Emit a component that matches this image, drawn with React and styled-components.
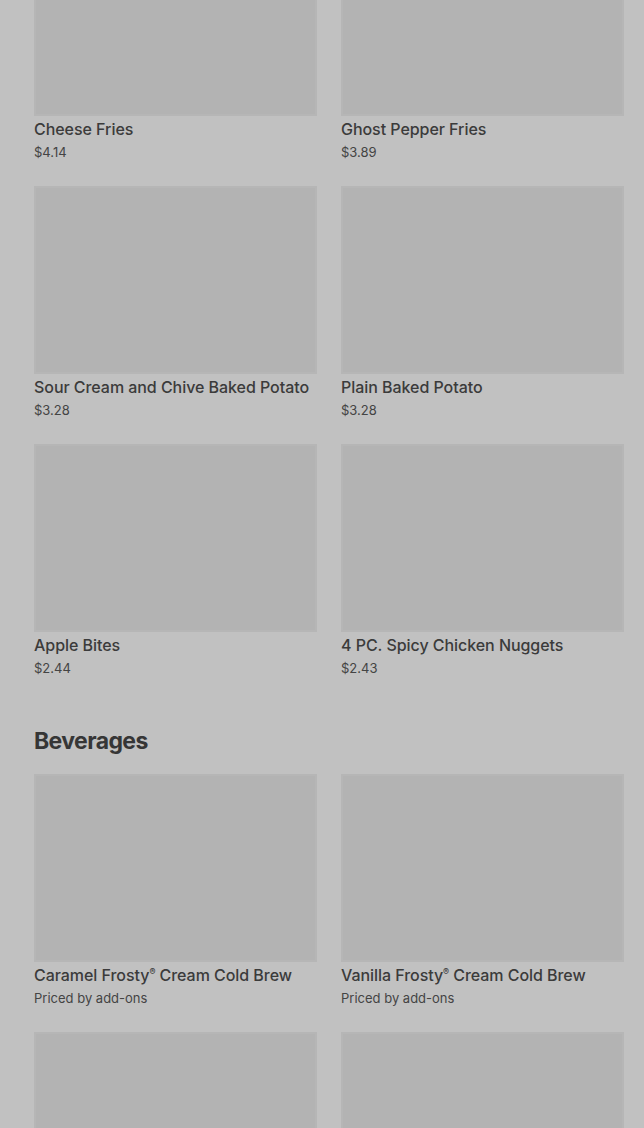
import React from "react";
import styled, { createGlobalStyle } from "styled-components";

const Global = createGlobalStyle`
  html, body { margin: 0; padding: 0; background: #c1c1c1; }
  body { font-family: Inter, "Noto Sans", sans-serif; color: #3a3a3a; overflow: hidden; }
`;

const Page = styled.div`
  height: 1200px;
  overflow: hidden;
  padding: 0 20px 0 34px;
  margin-top: -72px;
  display: flex;
  flex-direction: column;
`;

const Section = styled.section`
  display: flex;
  flex-direction: column;
  & + & { margin-top: 48px; }
`;

const Heading = styled.h2`
  margin: 0 0 17px;
  font-family: Inter, "Noto Sans", sans-serif;
  font-weight: 700;
  font-size: 23px;
  line-height: 32px;
  letter-spacing: -0.6px;
  color: #363636;
`;

const Grid = styled.div`
  display: grid;
  grid-template-columns: 283px 283px;
  column-gap: 24px;
  row-gap: 25px;
`;

const Card = styled.div`
  display: flex;
  flex-direction: column;
`;

const Thumb = styled.div`
  height: 188px;
  background: #b3b3b3;
  box-shadow: inset 0 0 0 2px rgba(255, 255, 255, 0.04);
`;

const Title = styled.div`
  margin-top: 3px;
  font-size: 16px;
  line-height: 20px;
  font-weight: 500;
  color: #3b3b3b;
  white-space: nowrap;
  letter-spacing: -0.05px;

  sup {
    font-size: 9px;
    line-height: 0;
    vertical-align: 6px;
  }
`;

const Price = styled.div`
  margin-top: 4px;
  font-size: 13px;
  line-height: 18px;
  font-weight: 400;
  color: #444444;
`;

const sides = [
  ["Cheese Fries", "$4.14"],
  ["Ghost Pepper Fries", "$3.89"],
  ["Sour Cream and Chive Baked Potato", "$3.28"],
  ["Plain Baked Potato", "$3.28"],
  ["Apple Bites", "$2.44"],
  ["4 PC. Spicy Chicken Nuggets", "$2.43"],
];

const beverages = [
  ["Caramel Frosty", "Cream Cold Brew", "Priced by add-ons"],
  ["Vanilla Frosty", "Cream Cold Brew", "Priced by add-ons"],
  ["Chocolate Frosty", "Cream Cold Brew", "Priced by add-ons"],
  ["Cold Brew", "", "Priced by add-ons"],
];

const Item = ({ name, rest, price }) => (
  <Card>
    <Thumb />
    <Title>
      {name}
      {rest ? (
        <>
          <sup>®</sup> {rest}
        </>
      ) : null}
    </Title>
    <Price>{price}</Price>
  </Card>
);

export default function App() {
  return (
    <>
      <Global />
      <Page>
        <Section>
          <Grid>
            {sides.map(([n, p]) => (
              <Item key={n} name={n} price={p} />
            ))}
          </Grid>
        </Section>
        <Section>
          <Heading>Beverages</Heading>
          <Grid>
            {beverages.map(([n, r, p]) => (
              <Item key={n} name={n} rest={r} price={p} />
            ))}
          </Grid>
        </Section>
      </Page>
    </>
  );
}
